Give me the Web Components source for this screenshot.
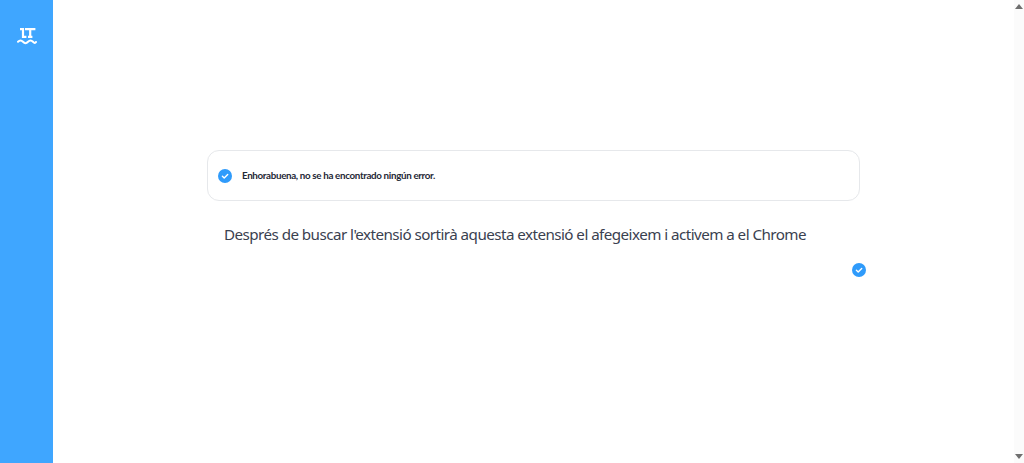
<!DOCTYPE html>
<html lang="es">
<head>
<meta charset="utf-8">
<title>LanguageTool</title>
<style>
  html, body { margin: 0; height: 100%; overflow: hidden; background: #fff; }
  body { font-family: "Lato", "Noto Sans", sans-serif; }
</style>
</head>
<body>
<lt-app>
  <lt-sidebar slot="sidebar"></lt-sidebar>
  <lt-result>Enhorabuena, no se ha encontrado ningún error.</lt-result>
  <lt-text>Després de buscar l'extensió sortirà aquesta extensió el afegeixem i activem a el Chrome</lt-text>
  <lt-check-row></lt-check-row>
</lt-app>
<script>
// icono de check compartido
const checkIcon = (size) => `
  <svg width="${size}" height="${size}" viewBox="0 0 14 14" aria-hidden="true">
    <circle cx="7" cy="7" r="7" fill="#2f9bfb"/>
    <path d="M4.4 7.2 6.2 8.9 9.7 5.4" fill="none" stroke="#fff" stroke-width="1.4" stroke-linecap="round" stroke-linejoin="round"/>
  </svg>`;

class LtApp extends HTMLElement {
  constructor() {
    super();
    this.attachShadow({ mode: "open" });
    this.shadowRoot.innerHTML = `
      <style>
        :host { display: flex; height: 463px; }
        main {
          flex: 1;
          display: flex;
          flex-direction: column;
          align-items: flex-start;
          padding: 150px 0 0 154px;
          min-width: 0;
        }
        .scrollbar {
          width: 10px;
          background: #fbfbfb;
          display: flex;
          flex-direction: column;
          justify-content: space-between;
          align-items: center;
          padding: 4px 0;
          box-sizing: border-box;
        }
        .up, .down { width: 0; height: 0; border-left: 4px solid transparent; border-right: 4px solid transparent; }
        .up { border-bottom: 5px solid #6f6f6f; }
        .down { border-top: 5px solid #6f6f6f; }
      </style>
      <slot name="sidebar"></slot>
      <main><slot></slot></main>
      <div class="scrollbar"><span class="up"></span><span class="down"></span></div>
    `;
  }
}

class LtSidebar extends HTMLElement {
  constructor() {
    super();
    this.attachShadow({ mode: "open" });
    this.shadowRoot.innerHTML = `
      <style>
        :host {
          display: flex;
          justify-content: center;
          align-items: flex-start;
          width: 53px;
          flex: none;
          padding-top: 28px;
          box-sizing: border-box;
          background: #3fa6ff;
        }
        svg { display: block; }
      </style>
      <svg width="20" height="17" viewBox="0 0 20 17" fill="none" stroke="#fff" stroke-width="2.2">
        <path d="M3 1.1H6V8.8H9.4"/>
        <path d="M8 1.1H18.4M13.2 1.1V9.9M11 8.8H15.4"/>
        <path d="M1 13.8C2.7 12 4.3 12 6 13.8S9.3 15.6 11 13.8 14.3 12 16 13.8 18 15 19 14" stroke-width="2" stroke-linecap="round"/>
      </svg>
    `;
  }
}

class LtResult extends HTMLElement {
  constructor() {
    super();
    this.attachShadow({ mode: "open" });
    this.shadowRoot.innerHTML = `
      <style>
        :host {
          display: flex;
          align-items: center;
          gap: 10px;
          box-sizing: border-box;
          width: 653px;
          height: 51px;
          padding-left: 10px;
          border: 1px solid #e6e8eb;
          border-radius: 12px;
          background: #fff;
          color: #1f2937;
          font-family: "Lato", sans-serif;
          font-size: 9.8px;
          font-weight: 700;
          letter-spacing: -0.34px;
        }
        svg { display: block; flex: none; }
        span { margin-top: -1px; }
      </style>
      ${checkIcon(14)}
      <span><slot></slot></span>
    `;
  }
}

class LtText extends HTMLElement {
  constructor() {
    super();
    this.attachShadow({ mode: "open" });
    this.shadowRoot.innerHTML = `
      <style>
        :host {
          display: block;
          margin: 22px 0 0 17px;
          color: #3a4150;
          font-family: "Noto Sans", sans-serif;
          font-size: 15.2px;
          letter-spacing: -0.55px;
          line-height: 22px;
          white-space: nowrap;
        }
      </style>
      <slot></slot>
    `;
  }
}

class LtCheckRow extends HTMLElement {
  constructor() {
    super();
    this.attachShadow({ mode: "open" });
    this.shadowRoot.innerHTML = `
      <style>
        :host {
          display: flex;
          justify-content: flex-end;
          box-sizing: border-box;
          width: 659px;
          margin-top: 18px;
        }
        svg { display: block; }
      </style>
      ${checkIcon(14)}
    `;
  }
}

customElements.define("lt-app", LtApp);
customElements.define("lt-sidebar", LtSidebar);
customElements.define("lt-result", LtResult);
customElements.define("lt-text", LtText);
customElements.define("lt-check-row", LtCheckRow);
</script>
</body>
</html>
